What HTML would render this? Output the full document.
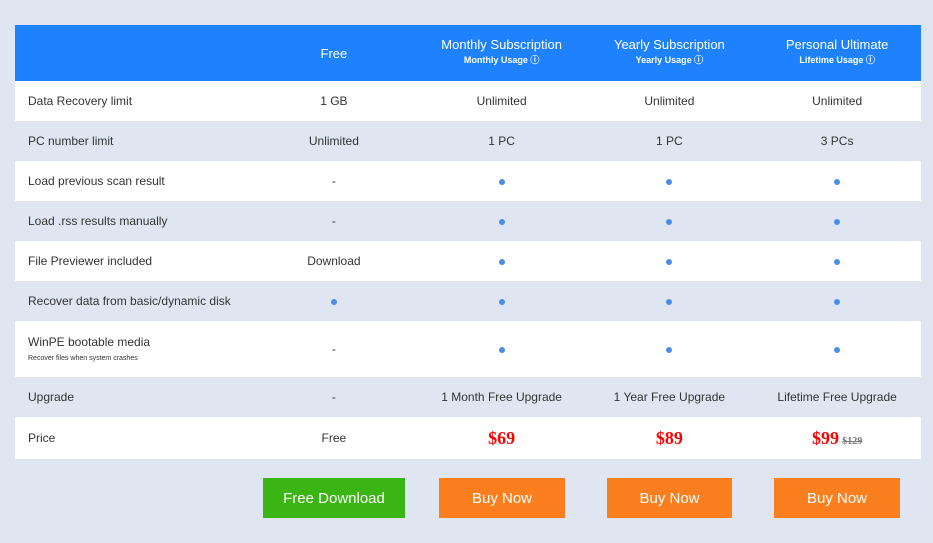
<!DOCTYPE html><html><head><style>
body{margin:0;width:933px;height:543px;background:#dfe6f2;font-family:"Liberation Sans",sans-serif;position:relative;overflow:hidden}
.t{position:absolute;left:15px;top:25px;width:906px}
.r{display:flex;height:40px;align-items:center;font-size:12px;color:#333}
.r.w{background:#fff}
.r div{width:167.75px;text-align:center}
.r div.l{width:235px;text-align:left;padding-left:13px;box-sizing:border-box}
.h{background:#1e82fe;height:56px;color:#fff;font-size:13px}
.h div{margin-top:-3px}
.h small{display:block;font-size:9px;font-weight:bold;margin-top:1px}
.d{display:inline-block;width:6px;height:6px;border-radius:50%;background:#4a8ee8}
.p{color:#f00;font-family:"Liberation Serif",serif;font-weight:bold;font-size:18px}
.s{color:#777;font-size:10px;text-decoration:line-through;font-family:"Liberation Serif",serif;font-weight:bold}
.b{position:absolute;top:478px;height:40px;color:#fff;font-size:15px;display:flex;align-items:center;justify-content:center;background:#fb7f1e}
</style></head><body>
<div class="t">
<div class="r h"><div class="l"></div><div style="margin-top:0">Free</div><div>Monthly Subscription<small>Monthly Usage ⓘ</small></div><div>Yearly Subscription<small>Yearly Usage ⓘ</small></div><div>Personal Ultimate<small>Lifetime Usage ⓘ</small></div></div>
<div class="r w"><div class="l">Data Recovery limit</div><div>1 GB</div><div>Unlimited</div><div>Unlimited</div><div>Unlimited</div></div>
<div class="r"><div class="l">PC number limit</div><div>Unlimited</div><div>1 PC</div><div>1 PC</div><div>3 PCs</div></div>
<div class="r w"><div class="l">Load previous scan result</div><div>-</div><div><span class="d"></span></div><div><span class="d"></span></div><div><span class="d"></span></div></div>
<div class="r"><div class="l">Load .rss results manually</div><div>-</div><div><span class="d"></span></div><div><span class="d"></span></div><div><span class="d"></span></div></div>
<div class="r w"><div class="l">File Previewer included</div><div>Download</div><div><span class="d"></span></div><div><span class="d"></span></div><div><span class="d"></span></div></div>
<div class="r"><div class="l">Recover data from basic/dynamic disk</div><div><span class="d"></span></div><div><span class="d"></span></div><div><span class="d"></span></div><div><span class="d"></span></div></div>
<div class="r w" style="height:56px"><div class="l">WinPE bootable media<br><span style="font-size:7px">Recover files when system crashes</span></div><div>-</div><div><span class="d"></span></div><div><span class="d"></span></div><div><span class="d"></span></div></div>
<div class="r"><div class="l">Upgrade</div><div>-</div><div>1 Month Free Upgrade</div><div>1 Year Free Upgrade</div><div>Lifetime Free Upgrade</div></div>
<div class="r w" style="height:42px"><div class="l">Price</div><div>Free</div><div class="p">$69</div><div class="p">$89</div><div><span class="p">$99</span> <span class="s">$129</span></div></div>
</div>
<div class="b" style="left:263px;width:142px;background:#3ab513">Free Download</div>
<div class="b" style="left:439px;width:126px">Buy Now</div>
<div class="b" style="left:607px;width:125px">Buy Now</div>
<div class="b" style="left:774px;width:126px">Buy Now</div>
</body></html>
